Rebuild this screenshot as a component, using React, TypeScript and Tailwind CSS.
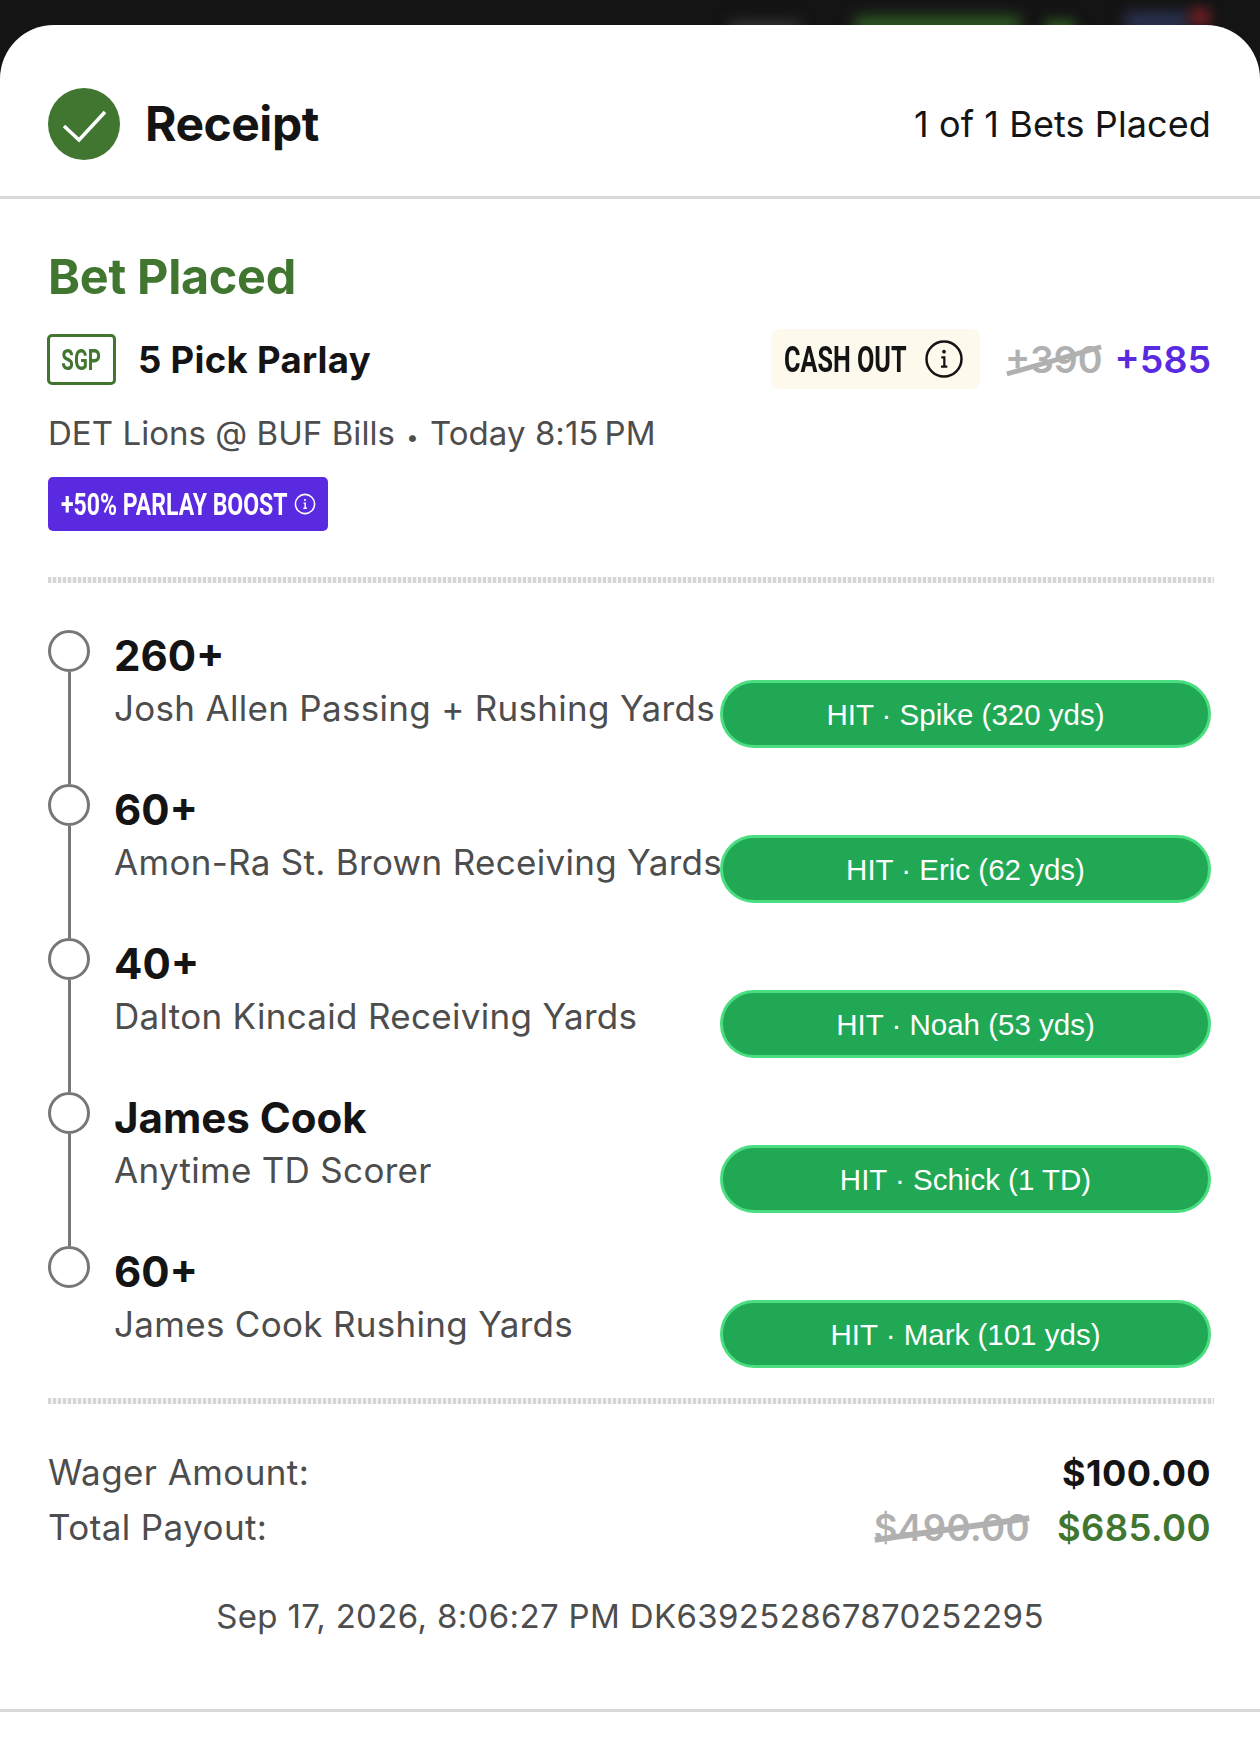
import React from 'react';

const legs = [
  { title: '260+', sub: 'Josh Allen Passing + Rushing Yards', hit: 'HIT · Spike (320 yds)' },
  { title: '60+', sub: 'Amon-Ra St. Brown Receiving Yards', hit: 'HIT · Eric (62 yds)' },
  { title: '40+', sub: 'Dalton Kincaid Receiving Yards', hit: 'HIT · Noah (53 yds)' },
  { title: 'James Cook', sub: 'Anytime TD Scorer', hit: 'HIT · Schick (1 TD)' },
  { title: '60+', sub: 'James Cook Rushing Yards', hit: 'HIT · Mark (101 yds)' },
];

const Dotted = () => (
  <div className="h-[6px] w-[1166px] bg-[repeating-linear-gradient(90deg,#d6d6d6_0px,#d6d6d6_3px,#f4f4f4_3px,#f4f4f4_5px)]" />
);

// info glyph with the small serif "i" used in the app
const InfoIcon = ({ size, sw }: { size: number; sw: number }) => (
  <svg width={size} height={size} viewBox="0 0 24 24" fill="none" stroke="currentColor" strokeWidth={sw} className="shrink-0">
    <circle cx="12" cy="12" r="10.5" />
    <path d="M10.4 11h1.8v5.4M10.2 16.6h3.8" strokeWidth={sw * 0.9} />
    <circle cx="12" cy="7.6" r="1.1" fill="currentColor" stroke="none" />
  </svg>
);

export default function App() {
  return (
    <div className="relative h-[1764px] w-[1260px] overflow-hidden bg-[#141414] pt-[25px] font-['Inter',sans-serif] text-[#141414]">
      {/* blurred app content peeking out behind the sheet */}
      <div className="absolute left-[730px] top-[22px] h-[14px] w-[70px] bg-[#3a3a3a] blur-[7px]" />
      <div className="absolute left-[855px] top-[16px] h-[18px] w-[165px] bg-[#2f5a22] blur-[7px]" />
      <div className="absolute left-[1045px] top-[20px] h-[14px] w-[30px] bg-[#2f5a22] blur-[6px]" />
      <div className="absolute left-[1125px] top-[12px] h-[20px] w-[65px] bg-[#2a3350] blur-[7px]" />
      <div className="absolute left-[1190px] top-[8px] h-[18px] w-[20px] bg-[#6b1f24] blur-[6px]" />

      <div className="relative flex h-[1739px] flex-col rounded-t-[54px] bg-white">
        <header className="flex h-[174px] shrink-0 items-center justify-between border-b-[3px] border-[#d9d9d9] pl-[48px] pr-[49px] pt-[26px]">
          <div className="flex items-center gap-[25px]">
            <div className="flex h-[72px] w-[72px] items-center justify-center rounded-full bg-[#417630]">
              <svg width="72" height="72" viewBox="0 0 72 72" fill="none" stroke="white" strokeWidth="3.5">
                <path d="M16 38L31 52L57 24" />
              </svg>
            </div>
            <span className="text-[48px] font-bold leading-none tracking-[-0.5px]">Receipt</span>
          </div>
          <span className="text-[36px] leading-none tracking-[0.1px]">1 of 1 Bets Placed</span>
        </header>

        <section className="px-[48px] pt-[51px]">
          <h2 className="text-[48.5px] font-bold leading-[54px] tracking-[-0.3px] text-[#417630]">Bet Placed</h2>

          <div className="mt-[25px] flex h-[60px] items-center justify-between pr-[1px]">
            <div className="flex items-center">
              <div className="-ml-[1px] flex h-[51px] w-[69px] items-center justify-center rounded-[5px] border-[3px] border-[#417630] font-['Roboto',sans-serif] text-[30px] font-bold text-[#417630]">
                <span className="inline-block scale-x-[0.68] whitespace-nowrap">SGP</span>
              </div>
              <span className="ml-[22px] pt-[2px] text-[36.5px] font-bold leading-none tracking-[0.3px]">5 Pick Parlay</span>
            </div>
            <div className="flex items-center">
              <div className="flex h-[60px] w-[209px] items-center justify-between rounded-[8px] bg-[#fdf9ec] pl-[13px] pr-[16px]">
                <span className="inline-block w-[124px] origin-left scale-x-[0.7] whitespace-nowrap pt-[2px] font-['Roboto',sans-serif] text-[36px] font-bold leading-none">CASH OUT</span>
                <InfoIcon size={40} sw={1.5} />
              </div>
              <div className="relative ml-[25px] pt-[2px] text-[37.5px] font-semibold leading-none text-[#b0b0b0]">
                +390
                <div className="absolute left-0 right-0 top-[19px] h-[5px] -rotate-[16deg] bg-[#b0b0b0]" />
              </div>
              <span className="ml-[12px] pt-[2px] text-[37.5px] font-semibold leading-none text-[#5a2ae0]">+585</span>
            </div>
          </div>

          <p className="mt-[24px] text-[33px] leading-[40px] tracking-[0.05px] text-[#4d4d4d]">
            DET Lions @ BUF Bills<span className="inline-block w-[35px] text-center text-[22px]">•</span>Today 8:15{'\u2009'}PM
          </p>

          <div className="mt-[20px] flex h-[54px] w-[280px] items-center gap-[8px] rounded-[5px] bg-[#5a2ae0] pl-[13px] text-white">
            <span className="inline-block w-[225px] origin-left scale-x-[0.72] whitespace-nowrap font-['Roboto',sans-serif] text-[32px] font-bold leading-none">+50% PARLAY BOOST</span>
            <InfoIcon size={22} sw={1.7} />
          </div>

          <div className="mt-[46px]"><Dotted /></div>
        </section>

        <section className="flex px-[48px] pt-[47px]">
          <div className="w-[672px] shrink-0">
            {legs.map((leg, i) => (
              <div key={i} className="flex h-[154px]">
                <div className="flex w-[42px] shrink-0 flex-col items-center">
                  <div className="h-[42px] w-[42px] shrink-0 rounded-full border-[3px] border-[#777777]" />
                  {i < legs.length - 1 && <div className="w-[3px] flex-1 bg-[#777777]" />}
                </div>
                <div className="ml-[24px] whitespace-nowrap pt-[1px]">
                  <div className="text-[42px] font-bold leading-[50px]">{leg.title}</div>
                  <div className="mt-[2px] text-[35px] leading-[50px] tracking-[0.3px] text-[#4d4d4d]">{leg.sub}</div>
                </div>
              </div>
            ))}
          </div>
          <div className="relative mt-[50px] flex w-[491px] shrink-0 flex-col gap-[87px]">
            {legs.map((leg, i) => (
              <div key={i} className="flex h-[68px] items-center justify-center rounded-full border-[3px] border-[#4ade80] bg-[#21a854] pt-[2px] font-['Liberation_Sans',sans-serif] text-[29.5px] text-white">
                {leg.hit}
              </div>
            ))}
          </div>
        </section>

        <section className="-mt-[2px] px-[48px]">
          <Dotted />
          <div className="mt-[40px] flex h-[56px] items-center justify-between pr-[1px] text-[35px] tracking-[0.4px]">
            <span className="text-[#4d4d4d]">Wager Amount:</span>
            <span className="pt-[2px] text-[36px] font-bold text-[#141414]">$100.00</span>
          </div>
          <div className="flex h-[54px] items-center justify-between pr-[1px] text-[35px] tracking-[0.4px]">
            <span className="text-[#4d4d4d]">Total Payout:</span>
            <div className="flex items-center gap-[27px] pt-[2px] text-[36.5px] font-semibold">
              <div className="relative text-[#b0b0b0]">
                $490.00
                <div className="absolute left-0 right-0 top-[25px] h-[6px] -rotate-[8deg] bg-[#b0b0b0]" />
              </div>
              <span className="text-[#417630]">$685.00</span>
            </div>
          </div>
          <p className="mt-[42px] text-center text-[33px] leading-[40px] tracking-[0.35px] text-[#4d4d4d]">Sep 17, 2026, 8:06:27 PM DK639252867870252295</p>
        </section>

        <div className="mt-[73px] h-[3px] w-full bg-[#d9d9d9]" />
      </div>
    </div>
  );
}
